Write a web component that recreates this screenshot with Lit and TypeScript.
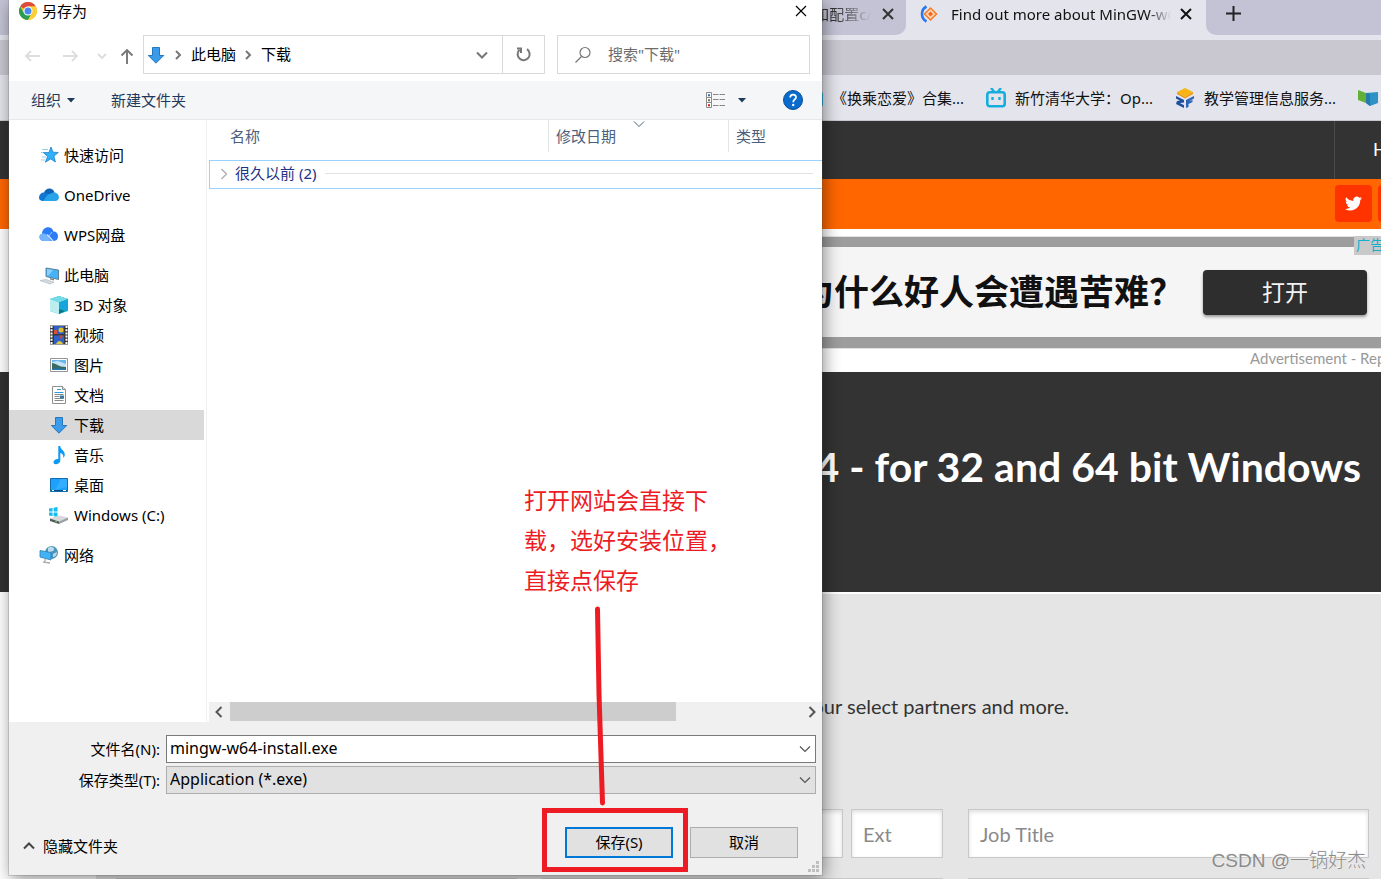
import { LitElement, html, css, svg, nothing, TemplateResult } from "lit";
import { customElement } from "lit/decorators.js";
import { classMap } from "lit/directives/class-map.js";

/* ---------- icons ---------- */
const downArrow = html`<svg class="ico" viewBox="0 0 20 20"><path d="M6.5 2.5h7v8h4.2L10 18.2 2.3 10.500h4.200z" fill="#3a9bea" stroke="#2478bf"/></svg>`;
const chrome = html`<svg width="18" height="18" viewBox="0 0 18 18">
  <circle cx="9" cy="9" r="9" fill="#fbc926"/>
  <path d="M9 9L1.200 4.500A9 9 0 0 1 16.800 4.500H9z" fill="#dd4b3e"/>
  <path d="M1.200 4.500A9 9 0 0 0 9 18L12.900 11.250 9 9 5.100 11.250z" fill="#2a9d55"/>
  <path d="M16.800 4.500H9v4.500l3.900 2.250L9 18A9 9 0 0 0 16.800 4.500z" fill="#fbcf38"/>
  <circle cx="9" cy="9" r="4.500" fill="#fff"/><circle cx="9" cy="9" r="3.500" fill="#4688f1"/></svg>`;
const icons: Record<string, TemplateResult> = {
  star: html`<svg class="ico" viewBox="0 0 20 20"><path d="M3 4.500h6M2 7.500h5M3 12h4M2 15h4" stroke="#9ccbe6"/><path d="M12 2l2 5.200 5.300.300-4.300 3.600 1.400 5.900-4.700-3.100-5.300 3.300 2.200-5.800L4.500 7.800l5.500-.300z" fill="#2fb0fb" stroke="#1f7fc4" stroke-width=".8"/></svg>`,
  onedrive: html`<svg class="ico" viewBox="0 0 20 20"><path d="M5 7.500C7 2 14 2 15.500 7.500L10 12z" fill="#0d64b6"/><path d="M0 13C0 8 5 6 9 9l7 7H4c-2.500 0-4-1.500-4-3z" fill="#1077d3"/><path d="M9 9.500l4-1.500c4-1.800 7 1.500 6.900 4.500 0 2.500-1.900 3.500-3.900 3.500H4z" fill="#28a3ea"/></svg>`,
  wps: html`<svg class="ico" viewBox="0 0 20 20"><path d="M3 9C3 1 13 0 14.500 6.500c3 0 4.500 2 4.500 5S17 16 14 16H5c-3 0-4.500-2-4.500-4S1.500 9 3 9z" fill="#2b7cf6"/><path d="M.5 12c0-4 6-5 8-1l3.500 5H5c-3 0-4.500-2-4.500-4z" fill="#73b4fd"/><path d="M8 9.500l6 6.500" stroke="#d8eaff" stroke-width="1.200"/><path d="M10 11l3-4" stroke="#8fc4ff"/></svg>`,
  pc: html`<svg class="ico" viewBox="0 0 20 20"><path d="M7 3l12.500 2v9.500L7 11.500z" fill="#45b1f7" stroke="#557588" stroke-width=".9"/><path d="M8 4l6 1L9 11l-1-.5z" fill="#8bd0fa"/><path d="M11 13l4 1v1.500l-4-1z" fill="#79858d"/><path d="M1 15.500l6-1 8 2.700-4 1.800z" fill="#d7dce0" stroke="#a9b0b6" stroke-width=".6"/></svg>`,
  cube: html`<svg class="ico" viewBox="0 0 20 20"><path d="M10 1l9 3v12l-9 3-9-3V4z" fill="#1cb1cb"/><path d="M10 1l9 3-9 3.500L1 4z" fill="#74dbe6"/><path d="M1 4l9 3.500V19l-9-3z" fill="#bdeeee"/><path d="M10 7.500L19 4v12l-9-2z" fill="#16a5dd"/><path d="M10 14l6 2-6 3z" fill="#0d7488"/></svg>`,
  film: html`<svg class="ico" viewBox="0 0 20 20"><path d="M1 .5h18v19H1z" fill="#383838"/><path d="M2.500 1v18M17.500 1v18" stroke="#fff" stroke-width="2" stroke-dasharray="2 1.200"/><path d="M5 1h10v8H5zM5 10.500h10v8.500H5z" fill="#2d61c9"/><circle cx="12" cy="5" r="2.500" fill="#e5bd2b"/><path d="M5 5h3v4H5z" fill="#d9503d"/><path d="M10 10.500h4l-2 4z" fill="#d4472d"/><path d="M7 19c2-4 5-4 7 0z" fill="#e4c936"/></svg>`,
  photo: html`<svg class="ico" viewBox="0 0 20 20"><path d="M1.500 3.500h17v13h-17z" fill="#fff" stroke="#949494"/><path d="M3 5h14v10H3z" fill="#68b7ec"/><path d="M3 7l6-1 8 3v3H3z" fill="#c5e3f5"/><path d="M3 8c4 0 6 4 14 4v3H3z" fill="#396b62"/><path d="M3 13.500h14V15H3z" fill="#2675ab"/></svg>`,
  doc: html`<svg class="ico" viewBox="0 0 20 20"><path d="M3.500 1.500h10l3 3v14h-13z" fill="#fff" stroke="#8f8f8f"/><path d="M13.500 1.500v3h3" fill="#ddd" stroke="#8f8f8f"/><path d="M8 4.500h4M5.500 7.500h9" stroke="#2b9be0" stroke-width="1.200"/><path d="M5.500 9.500h9M5.500 11.500h5M5.500 13.500h9M5.500 15.500h9" stroke="#878787"/><path d="M11 10.500h4v3h-4z" fill="#327ba3"/></svg>`,
  down: downArrow,
  music: html`<svg class="ico" viewBox="0 0 20 20"><path d="M9.300 1h2c0 3.500 4.500 4.500 4.500 8.500 0 2-1 3-1.500 3.500.5-3-1-4.500-3-5v7.500c0 2-2 3.700-4.500 3.700-1.500 0-2.300-1-2.300-2 0-2 2.500-3.700 4.800-3.200z" fill="#0c9af2"/></svg>`,
  desk: html`<svg class="ico" viewBox="0 0 20 20"><path d="M1.500 3.500h17v13h-17z" fill="#1da1fb" stroke="#126db0"/><path d="M12 4h6v8L6 15z" fill="#35adff"/><path d="M2 15.500h16" stroke="#0b4c82" /><path d="M3 15.500h2M14 15.500h3" stroke="#fff"/></svg>`,
  drive: html`<svg class="ico" viewBox="0 0 20 20"><path d="M0 3.500l3.600-.5v3.500H0zM4.600 2.800L8.500 2v4.500H4.600zM0 7.500h3.600v3.600L0 10.600zM4.600 7.500h3.900V12l-3.900-.700z" fill="#13bdf3"/><path d="M1 13.500l9-3 9 2-9 4z" fill="#d9d9dc"/><path d="M1 13.500l9 3V19l-9-3z" fill="#55595c"/><path d="M10 16.500l9-4v2.500L10 19z" fill="#9a9ea2"/><path d="M6 16l2 .7" stroke="#4fdc67"/></svg>`,
  net: html`<svg class="ico" viewBox="0 0 20 20"><circle cx="12.500" cy="7.500" r="6.500" fill="#4f93b8"/><path d="M9 3c3-3 7 0 6 2s-4 1-6 3zM14 9l4-2c0 3-2 5-4 5z" fill="#b6dced"/><path d="M1 5.500l11 2V15L1 12z" fill="#40b2f8" stroke="#2d7fb1" stroke-width=".8"/><path d="M6 14v3l4 1.500M4 17l7 1" stroke="#a9b0b4" stroke-width="1.300" fill="none"/></svg>`,
};
const chevron = (cls = "") => html`<svg class="chev ${cls}" width="12" height="12" viewBox="0 0 12 12"><path d="M1 3.500l5 5 5-5"/></svg>`;
const smallChevron = html`<svg class="chev bold" width="10" height="12" viewBox="0 0 10 12"><path d="M3 2l4 4-4 4"/></svg>`;
const cross = (w: number) => html`<svg width="12" height="12" viewBox="0 0 12 12"><path d="M1 1l10 10M11 1L1 11" stroke="currentColor" stroke-width=${w}/></svg>`;

const uiFont = css`"Noto Sans", "Noto Sans CJK SC", sans-serif`;
const pageFont = css`Lato, "Noto Sans CJK SC", sans-serif`;

const reset = css`
  * { box-sizing: border-box; }
  button, input, select { font: inherit; color: inherit; margin: 0; }
  button { background: none; border: 0; padding: 0; }
  svg { display: block; flex: none; }
  h1, p, ul { margin: 0; padding: 0; }
  a { color: inherit; text-decoration: none; }
`;

/* ---------- browser window behind the dialog ---------- */
@customElement("browser-page")
class BrowserPage extends LitElement {
  static styles = [reset, css`
    :host { display: block; background: #fff; font: 15px/20px ${uiFont}; color: #111; white-space: nowrap; }
    .strip { display: flex; height: 40px; padding-bottom: 5px; background: #e4e4ec; }
    .old, .rest { background: #c4c3d5; display: flex; align-items: center; padding-bottom: 8px; }
    .old { width: 906px; justify-content: flex-end; border-bottom-right-radius: 10px; padding-right: 12px; gap: 10px; color: #333; }
    .rest { flex: 1; border-bottom-left-radius: 10px; padding-left: 20px; }
    .fade { overflow: hidden; -webkit-mask-image: linear-gradient(to left, transparent, #000 36px); mask-image: linear-gradient(to left, transparent, #000 36px); }
    .tab { width: 300px; display: flex; align-items: center; padding: 0 14px 8px; gap: 13px; }
    .tab .fade { flex: 1; margin-right: -4px; -webkit-mask-image: linear-gradient(to left, transparent, #000 24px); mask-image: linear-gradient(to left, transparent, #000 24px); }
    .omni { height: 35px; background: #c9c8d1; }
    .marks { display: flex; align-items: center; gap: 22px; height: 46px; padding-left: 803px; background: #e4e4ec; border-bottom: 1px solid #c9c8d1; }
    .marks a { display: flex; align-items: center; gap: 9px; }
    .nav { height: 58px; display: flex; background: #333; color: #fff; font: 18px/20px ${pageFont}; padding-left: 1334px; }
    .nav a { border-left: 1px solid #4a4a4a; padding: 18px 38px; }
    .social { display: flex; gap: 6px; height: 50px; background: #f60; padding: 6px 0 0 1335px; }
    .social a { flex: none; width: 37px; height: 37px; border-radius: 4px; background: #f30; display: grid; place-items: center; }
    .ad { position: relative; margin: 8px 0 0 400px; display: flex; align-items: center; gap: 36px; height: 111px; padding-left: 399px; background: #f5f5f5; border: solid #9d9d9d; border-width: 10px 0 11px; outline: 1px solid #e2e2e2; }
    .ad strong { font: 700 35px/50px "Noto Sans CJK SC", sans-serif; color: #111; width: 368px; overflow: hidden; padding-bottom: 4px; }
    .ad button { width: 164px; height: 45px; border-radius: 4px; background: #2e2e2e; color: #f2f2f2; font-size: 23px; box-shadow: 0 2px 3px #999; }
    .adlabel { position: absolute; right: 0; top: -11px; width: 27px; height: 19px; overflow: hidden; background: #c9c9c9; color: #14afcb; font-size: 14px; line-height: 18px; padding-left: 2px; }
    .note { height: 24px; color: #999; font: 15px/20px ${pageFont}; padding-left: 1250px; overflow: hidden; }
    .hero { height: 220px; background: #333; color: #fff; display: flex; align-items: center; justify-content: flex-end; padding: 0 20px 30px 0; }
    h1 { font: 700 41px/50px ${pageFont}; }
    .form { margin: 2px 0 0 96px; background: #e5e5e5; padding: 100px 12px 0 20px; font: 20px/24px ${pageFont}; color: #333; }
    .lead { width: 953px; text-align: right; }
    .grid { display: grid; grid-template-columns: repeat(3, 1fr); gap: 20px 25px; margin-top: 91px; }
    .split { display: grid; grid-template-columns: 1fr 92px; gap: 8px; }
    input { width: 100%; height: 49px; border: 1px solid #c8c8c8; border-radius: 0; background: #fff; padding: 0 11px; box-shadow: inset 0 2px 4px #ddd; }
    input::placeholder { color: #8a8a8a; opacity: 1; }
  `];

  render() {
    const field = (name: string, ph = "") => html`<input name=${name} aria-label=${name} placeholder=${ph || nothing}>`;
    return html`
      <div class="strip">
        <div class="old"><span class="fade">安装和配置c/</span>${cross(2)}</div>
        <div class="tab">
          <svg width="18" height="18" viewBox="0 0 18 18"><path d="M6.500 1.500a8.500 8.500 0 0 0 0 15" stroke="#2879ef" stroke-width="2.600" fill="none"/><path d="M10.500 3l6 6-6 6-6-6z" fill="#fbd4b4" stroke="#f47a28" stroke-width="1.500"/><path d="M10.500 6.500L13 9l-2.500 2.500L8 9z" fill="#f1671a"/></svg>
          <span class="fade">Find out more about MinGW-w64</span>${cross(2)}
        </div>
        <div class="rest"><svg width="15" height="15" viewBox="0 0 15 15"><path d="M7.500 0v15M0 7.500h15" stroke="#222" stroke-width="2"/></svg></div>
      </div>
      <div class="omni"></div>
      <div class="marks">
        ${["《换乘恋爱》合集...", "新竹清华大学：Op..."].map(t => html`<a href="#"><svg width="20" height="20" viewBox="0 0 20 20"><path d="M5 0l3 3.500M15 0l-3 3.500" stroke="#14addd" stroke-width="2.400"/><rect x="1.300" y="4.200" width="17.400" height="14" rx="2.500" fill="none" stroke="#14addd" stroke-width="2.600"/><path d="M6.500 9v3M13.500 9v3" stroke="#14addd" stroke-width="2.400"/></svg>${t}</a>`)}
        <a href="#"><svg width="20" height="20" viewBox="0 0 20 20"><path d="M10 0l8 4-8 5-8-5z" fill="#f8b414"/><path d="M2 4v2l8 4.500L18 6V4l-8 5z" fill="#ef9410"/><path d="M1 8l8 4v2.500l-4 .5 4 2.200V20l-8-4 1-3 3-.500-4-2z" fill="#1c4f9f"/><path d="M19 8l-8 4v8l2.500-1v-3l4-2v-2l-4 1.500 5.500-3z" fill="#2c65b8"/></svg>教学管理信息服务...</a>
        <a href="#" aria-label="书签"><svg width="20" height="20" viewBox="0 0 20 20"><path d="M0 2l8 3v10l-8-3z" fill="#62b036"/><path d="M8 5l12-1v11l-8 3-4-3z" fill="#2f92c6"/><path d="M8 5l4 1v12l-4-3z" fill="#237cab"/></svg></a>
      </div>
      <nav class="nav"><a href="#">Home</a></nav>
      <div class="social">
        <a href="#" aria-label="Twitter"><svg width="17" height="17" viewBox="0 0 24 24"><path fill="#fff" d="M24 4.600a10 10 0 0 1-2.800.8 5 5 0 0 0 2.100-2.700c-1 .6-2 1-3.100 1.200A4.900 4.900 0 0 0 11.800 8.400 14 14 0 0 1 1.700 3.200a4.900 4.900 0 0 0 1.500 6.600 4.900 4.900 0 0 1-2.200-.6c0 2.300 1.600 4.400 3.900 4.900a5 5 0 0 1-2.200.1 4.900 4.900 0 0 0 4.600 3.400A9.900 9.900 0 0 1 0 19.600 13.900 13.900 0 0 0 7.500 21.800c9.100 0 14.300-7.700 14-14.600A10 10 0 0 0 24 4.600z"/></svg></a>
        <a href="#" aria-label="Facebook"></a>
      </div>
      <div class="ad"><strong>为什么好人会遭遇苦难？</strong><button>打开</button><span class="adlabel">广告</span></div>
      <p class="note">Advertisement - Report</p>
      <div class="hero"><h1>MinGW-w64 - for 32 and 64 bit Windows</h1></div>
      <form class="form">
        <p class="lead">our select partners and more.</p>
        <div class="grid">
          ${field("Name")}
          <div class="split">${field("Phone")}${field("Ext", "Ext")}</div>
          ${field("Job Title", "Job Title")}
          ${field("Company")}${field("Size")}${field("Industry")}
        </div>
      </form>`;
  }
}

/* ---------- file dialog ---------- */
type Place = { icon: string; label: string; child?: boolean; gap?: boolean; on?: boolean };
const places: Place[] = [
  { icon: "star", label: "快速访问" },
  { icon: "onedrive", label: "OneDrive", gap: true },
  { icon: "wps", label: "WPS网盘", gap: true },
  { icon: "pc", label: "此电脑", gap: true },
  { icon: "cube", label: "3D 对象", child: true },
  { icon: "film", label: "视频", child: true },
  { icon: "photo", label: "图片", child: true },
  { icon: "doc", label: "文档", child: true },
  { icon: "down", label: "下载", child: true, on: true },
  { icon: "music", label: "音乐", child: true },
  { icon: "desk", label: "桌面", child: true },
  { icon: "drive", label: "Windows (C:)", child: true },
  { icon: "net", label: "网络", gap: true },
];

@customElement("save-dialog")
class SaveDialog extends LitElement {
  static styles = [reset, css`
    :host { display: flex; flex-direction: column; background: #fff; font: 15px/20px ${uiFont}; color: #000; box-shadow: 0 0 0 1px rgba(90, 90, 90, .2), 2px 4px 16px rgba(0, 0, 0, .45); white-space: nowrap; }
    .ico { width: 20px; height: 20px; }
    .title { display: flex; align-items: center; height: 35px; padding: 0 15px 13px 10px; gap: 5px; }
    .title span { flex: 1; }
    .bar { display: flex; align-items: stretch; height: 46px; padding: 0 12px 7px 15px; }
    .arrows { display: flex; align-items: center; width: 119px; color: #ddd; padding-top: 2px; }
    .arrows button:nth-child(2) { margin-left: 21px; }
    .arrows button:nth-child(3) { margin-left: 18px; }
    .arrows button:nth-child(4) { margin-left: 13px; color: #777; }
    .addr { flex: 1; display: flex; align-items: center; border: 1px solid #d9d9d9; padding-left: 2px; color: #000; }
    .addr .sep { margin: 0 8px 0 7px; }
    .addr button:not(.reload), .search input, .acts .save, .acts button { padding-bottom: 2px; }
    .addr .grow { flex: 1; }
    .addr > .chev { margin-right: 14px; }
    .reload { align-self: stretch; width: 42px; border-left: 1px solid #d9d9d9; display: grid; place-items: center; }
    .search { width: 253px; margin-left: 12px; border: 1px solid #d9d9d9; display: flex; align-items: center; padding: 0 16px; gap: 16px; }
    .search input { border: 0; width: 100%; outline: 0; min-width: 0; padding-left: 0; padding-right: 0; }
    .search input::placeholder { color: #6d6d6d; opacity: 1; }
    .tools { display: flex; align-items: center; height: 39px; padding: 0 19px 0 22px; background: #f5f6f7; border-bottom: 1px solid #e8e8e8; color: #1e395b; }
    .tools button { display: flex; align-items: center; gap: 6px; }
    .tools button:nth-child(2) { margin: 0 auto 0 36px; }
    .tools .help { margin-left: 36px; }
    .body { flex: 1; display: flex; min-height: 0; }
    .side { width: 198px; padding: 20px 2px 0 0; border-right: 1px solid #f0f0f0; }
    .side a { display: flex; align-items: center; gap: 5px; height: 30px; padding-left: 30px; }
    .side .child { padding-left: 40px; }
    .side .gap { margin-top: 10px; }
    .side .on { background: #d9d9d9; }
    .list { flex: 1; min-width: 0; display: flex; flex-direction: column; padding-left: 2px; overflow: hidden; }
    .files { flex: 1; }
    table { width: 100%; table-layout: fixed; border-collapse: collapse; text-align: left; }
    th { font-weight: 400; padding: 0; vertical-align: top; }
    .name { width: 340px; }
    .date { width: 180px; }
    .head { height: 40px; color: #4c607a; }
    .head div { position: relative; height: 32px; border-right: 1px solid #e5e5e5; padding: 6px 0 0 7px; }
    .head .name div { padding-left: 21px; }
    .head th:last-child div { border: 0; }
    .sort { position: absolute; left: 84px; top: -2px; }
    .sort .chev path { stroke-width: 1; }
    .group { display: flex; align-items: center; height: 29px; border: 1px solid #99d1ff; border-right: 0; padding: 0 9px 2px 8px; color: #1e3287; gap: 5px; }
    .group span { line-height: 20px; padding-bottom: 1px; }
    .group i { flex: 1; height: 1px; background: #e2e2e2; margin-left: 4px; }
    .scroll { display: flex; align-items: center; height: 20px; background: #f0f0f0; padding: 0 4px; color: #555; }
    .track { flex: 1; height: 20px; padding: 0 12px 1px 5px; }
    .thumb { height: 19px; width: 79%; background: #cdcdcd; }
    .foot { background: #f0f0f0; padding: 13px 6px 0 14px; height: 153px; }
    .fields { display: grid; grid-template-columns: 143px 1fr; grid-auto-rows: 28px; gap: 3px 0; align-items: center; }
    label { text-align: right; padding-right: 6px; }
    .combo { display: flex; align-items: center; height: 28px; border: 1px solid #7a7a7a; background: #fff; padding-right: 4px; }
    .combo.type { border-color: #adadad; background: #e1e1e1; }
    .combo .chev { color: #555; }
    .combo input, .combo select { flex: 1; min-width: 0; appearance: none; border: 0; background: none; outline: 0; padding: 0 3px 2px; height: 26px; font-size: 16px; }
    .acts { display: flex; align-items: center; margin-top: 33px; padding-right: 18px; gap: 17px; }
    .acts button { height: 31px; width: 108px; background: #e1e1e1; border: 1px solid #adadad; }
    .acts .save { border: 2px solid #0078d7; }
    .acts .hide { width: auto; background: none; border: 0; display: flex; align-items: center; gap: 8px; margin-right: auto; padding: 6px 0 0; color: #000; }
    .acts .hide .chev { color: #444; }
    .chev path { fill: none; stroke: currentColor; stroke-width: 1.200; }
    .chev.bold path { stroke-width: 2; }
    .chev.up { transform: rotate(180deg); }
    .chev.left { transform: rotate(90deg); }
    .chev.right { transform: rotate(-90deg); }
    .g { color: #777; }
    .group .l { color: #aaa; padding: 0; }
    .grip { position: absolute; right: 3px; bottom: 3px; }
  `];

  render() {
    const arrow = (d: string) => svg`<path d=${d} fill="none" stroke="currentColor" stroke-width="1.900"/>`;
    return html`
      <div class="title">${chrome}<span>另存为</span><button aria-label="关闭">${cross(1.2)}</button></div>
      <div class="bar">
        <div class="arrows">
          <button aria-label="后退"><svg width="17" height="16" viewBox="0 0 17 16">${arrow("M16 8H2M7 3L2 8l5 5")}</svg></button>
          <button aria-label="前进"><svg width="17" height="16" viewBox="0 0 17 16">${arrow("M1 8h14M10 3l5 5-5 5")}</svg></button>
          <button aria-label="最近"><svg width="10" height="8" viewBox="0 0 10 8">${arrow("M1 2l4 4 4-4")}</svg></button>
          <button aria-label="上移"><svg width="14" height="16" viewBox="0 0 14 16">${arrow("M7 16V2M1.500 7.500L7 2l5.500 5.500")}</svg></button>
        </div>
        <div class="addr">
          ${downArrow}
          <span class="sep g">${smallChevron}</span><button>此电脑</button>
          <span class="sep g">${smallChevron}</span><button>下载</button>
          <span class="grow"></span>${chevron("bold g")}
          <button class="reload" aria-label="刷新"><svg width="17" height="17" viewBox="0 0 17 17"><path d="M12 3.200a6 6 0 1 1-7.500.6" fill="none" stroke="#777" stroke-width="2"/><path d="M2 2.500h4v4.500" fill="none" stroke="#777" stroke-width="2"/></svg></button>
        </div>
        <div class="search">
          <svg width="18" height="18" viewBox="0 0 18 18"><circle cx="11" cy="6.500" r="5" fill="none" stroke="#777" stroke-width="1.200"/><path d="M7.500 10.500L1.500 16.500" stroke="#777" stroke-width="1.200"/></svg>
          <input aria-label="搜索" placeholder='搜索"下载"'>
        </div>
      </div>
      <div class="tools">
        <button>组织<svg width="8" height="5" viewBox="0 0 8 5"><path d="M0 0h8L4 4.500z" fill="#1e395b"/></svg></button>
        <button>新建文件夹</button>
        <button aria-label="视图"><svg width="19" height="16" viewBox="0 0 19 16"><path d="M.5.5h5v15h-5zM.5 5.500h5M.5 10.500h5" fill="#fff" stroke="#8a8a8a"/><path d="M2 2.200h2v2H2z" fill="#2d6fb0"/><path d="M2 7.200h2v2H2z" fill="#7a6a42"/><path d="M2 12.200h2v2H2z" fill="#c22"/><path d="M7 2.500h12M7 7.500h12M7 13.500h12" stroke="#888" stroke-dasharray="5.500 1"/></svg>
          <svg width="16" height="5" viewBox="0 0 16 5"><path d="M7 0h8l-4 4.500z" fill="#1e395b"/></svg></button>
        <button class="help" aria-label="帮助"><svg width="20" height="20" viewBox="0 0 20 20"><circle cx="10" cy="10" r="9.500" fill="#0a6bcf" stroke="#0d4f91"/><path d="M7.200 7.600c0-3.800 5.800-3.800 5.800-.4 0 2.200-2.800 2.300-2.800 5.000" fill="none" stroke="#fff" stroke-width="1.800"/><circle cx="10.200" cy="15" r="1.200" fill="#fff"/></svg></button>
      </div>
      <div class="body">
        <nav class="side">
          ${places.map(p => html`<a href="#" class=${classMap({ child: !!p.child, gap: !!p.gap, on: !!p.on })}>${icons[p.icon]}<span>${p.label}</span></a>`)}
        </nav>
        <div class="list">
          <div class="files">
            <table>
              <thead><tr class="head">
                <th class="name"><div>名称</div></th>
                <th class="date"><div>修改日期<span class="sort">${chevron()}</span></div></th>
                <th><div>类型</div></th>
              </tr></thead>
              <tbody><tr><th colspan="3"><div class="group"><span class="l">${chevron("right")}</span><span>很久以前 (2)</span><i></i></div></th></tr></tbody>
            </table>
          </div>
          <div class="scroll">${chevron("bold left")}<div class="track"><div class="thumb"></div></div>${chevron("bold right")}</div>
        </div>
      </div>
      <div class="foot">
        <div class="fields">
          <label for="fn">文件名(N):</label>
          <div class="combo"><input id="fn" value="mingw-w64-install.exe">${chevron()}</div>
          <label for="ft">保存类型(T):</label>
          <div class="combo type"><select id="ft"><option>Application (*.exe)</option></select>${chevron()}</div>
        </div>
        <div class="acts">
          <button class="hide">${chevron("bold up")}隐藏文件夹</button>
          <button class="save">保存(S)</button><button>取消</button>
        </div>
      </div>
      <svg class="grip" width="11" height="11" viewBox="0 0 11 11"><path d="M8 0h3v3H8zM8 4h3v3H8zM8 8h3v3H8zM4 4h3v3H4zM4 8h3v3H4zM0 8h3v3H0z" fill="#bfbfbf"/></svg>`;
  }
}

@customElement("app-root")
class AppRoot extends LitElement {
  static styles = [reset, css`
    :host { display: block; position: relative; height: 100vh; overflow: hidden; }
    .dialog { position: absolute; left: 9px; top: 0; bottom: 4px; width: min(813px, calc(100% - 18px)); }
    .tip { position: absolute; left: 524px; top: 480px; width: 200px; color: #ed1c24; font: 23px/40px ${uiFont}; white-space: nowrap; }
    .line { position: absolute; left: 590px; top: 604px; }
    .box { position: absolute; left: 542px; top: 808px; width: 146px; height: 64px; border: 5px solid #ed1c24; pointer-events: none; }
    .mark { position: absolute; right: 15px; bottom: 6px; font: 300 19px/24px "Liberation Sans", "Noto Sans CJK SC", sans-serif; color: #8c8c8c; text-shadow: -1px -1px 0 #f4f4f4; white-space: nowrap; }
  `];

  render() {
    return html`
      <browser-page></browser-page>
      <save-dialog class="dialog"></save-dialog>
      <p class="tip">打开网站会直接下<br>载，选好安装位置，<br>直接点保存</p>
      <svg class="line" width="20" height="206" viewBox="0 0 20 206"><path d="M7.500 5L9 90l3.500 109" fill="none" stroke="#ed1c24" stroke-width="5" stroke-linecap="round"/></svg>
      <div class="box"></div>
      <span class="mark">CSDN @一锅好杰</span>`;
  }
}
